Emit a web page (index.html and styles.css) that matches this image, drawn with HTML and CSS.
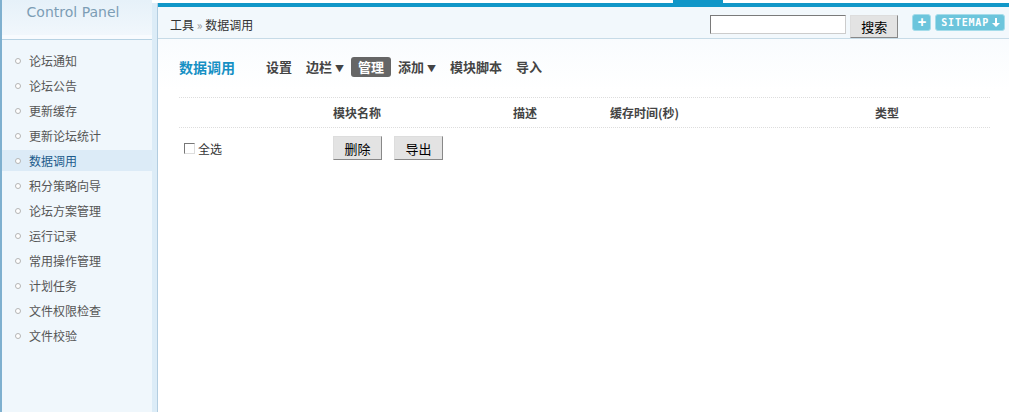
FILE: index.html
```html
<!DOCTYPE html>
<html lang="zh-CN">
<head>
    <meta charset="UTF-8">
    <title>Control Panel - 数据调用</title>
    <link rel="stylesheet" href="styles.css">
</head>
<body>
    <div class="frame">
        <div class="side">
            <div class="side-head">Control Panel</div>
            <ul class="menu">
                <li>论坛通知</li>
                <li>论坛公告</li>
                <li>更新缓存</li>
                <li>更新论坛统计</li>
                <li class="on">数据调用</li>
                <li>积分策略向导</li>
                <li>论坛方案管理</li>
                <li>运行记录</li>
                <li>常用操作管理</li>
                <li>计划任务</li>
                <li>文件权限检查</li>
                <li>文件校验</li>
            </ul>
        </div>
        <div class="strip"></div>
        <div class="main">
            <div class="tabs"><span class="tab"></span></div>
            <div class="topbar">
                <div class="crumb">工具 <span class="sep">&raquo;</span> 数据调用</div>
                <form class="search">
                    <input type="text">
                    <button type="button">搜索</button>
                </form>
                <div class="tools">
                    <span class="pill plus">+</span>
                    <span class="pill">SITEMAP <svg width="8" height="9" viewBox="0 0 8 9"><path d="M3 0h2v5h3L4 9 0 5h3z" fill="#fff"/></svg></span>
                </div>
            </div>
            <div class="content">
                <div class="subnav">
                    <h3>数据调用</h3>
                    <a>设置</a>
                    <a>边栏 <i>&#9660;</i></a>
                    <a class="cur">管理</a>
                    <a>添加 <i>&#9660;</i></a>
                    <a>模块脚本</a>
                    <a>导入</a>
                </div>
                <div class="grid head">
                    <span></span>
                    <span>模块名称</span>
                    <span>描述</span>
                    <span>缓存时间(秒)</span>
                    <span>类型</span>
                </div>
                <div class="grid row">
                    <label class="chk"><span class="box"></span>全选</label>
                    <div class="btns">
                        <button type="button">删除</button>
                        <button type="button">导出</button>
                    </div>
                </div>
            </div>
        </div>
    </div>
</body>
</html>
```

FILE: styles.css
```css
body { margin: 0; font-family: "Noto Sans CJK SC", "DejaVu Sans", sans-serif; font-size: 12px; color: #333; background: #fff; }
.frame { display: flex; width: 1009px; height: 412px; overflow: hidden; }

.side { width: 150px; border-left: 2px solid #7fb0cf; background: #f0f7fc; }
.side-head { height: 35px; border-bottom: 4px solid #f8fbfe; box-shadow: 0 1px 0 #b7d2e3; background: linear-gradient(#e6f1f9, #f1f7fc); color: #7c9db5; font-family: "DejaVu Sans", sans-serif; font-size: 14px; text-align: center; line-height: 24px; padding-right: 8px; margin-bottom: 11px; }
.menu { list-style: none; margin: 0; padding: 0; }
.menu li { height: 21px; line-height: 21px; margin-bottom: 4px; padding-left: 27px; color: #555; position: relative; }
.menu li::before { content: ""; position: absolute; left: 13px; top: 8px; width: 4px; height: 4px; border: 1px solid #b5b5b5; border-radius: 50%; background: #fff; }
.menu li.on { background: #dcebf7; color: #1d5b8c; }

.strip { width: 5px; background: #dcecf7; border-right: 1px solid #b3cde0; margin-top: 3px; }

.main { flex: 1; background: linear-gradient(#f4f9fd 0, #fff 90px); }
.tabs { height: 3px; background: #fff; }
.tab { display: block; width: 50px; height: 3px; margin-left: 515px; background: #1197c8; }
.topbar { display: flex; align-items: center; height: 28px; padding: 3px 4px 0 12px; border-top: 4px solid #1197c8; border-bottom: 1px solid #c7dbe7; background: #f2f8fc; }
.crumb { flex: 1; color: #333; }
.crumb .sep { color: #999; }
.search { display: flex; align-items: flex-start; gap: 4px; height: 23px; margin-top: 5px; }
.search input { width: 132px; height: 15px; padding: 1px; border: 1px solid #7a7a7a; border-right-color: #ccc; border-bottom-color: #ccc; }
.search button { width: 48px; height: 23px; padding: 0; border: 1px solid #888; border-top-color: #ddd; border-left-color: #ddd; background: #e3e3e3; font: 13px "Noto Sans CJK SC", sans-serif; color: #000; }
.tools { display: flex; gap: 4px; margin-left: 14px; margin-right: 0; margin-top: -4px; }
.pill { display: flex; align-items: center; gap: 3px; height: 15px; padding: 0 4px 0 5px; border: 1px solid #a5dcea; border-radius: 3px; background: #6cc5dc; color: #fff; font: bold 10px "DejaVu Sans Mono", monospace; letter-spacing: 0.8px; }
.pill.plus { font-size: 14px; width: 8px; justify-content: center; }

.content { padding: 12px 19px 0 21px; }
.subnav { display: flex; align-items: center; height: 32px; }
.subnav h3 { margin: 0 24px 0 0; font-size: 14px; color: #1690c4; }
.subnav a { padding: 0 7px; height: 20px; line-height: 20px; font-size: 13px; font-weight: bold; color: #444; border-radius: 3px; }
.subnav a i { font-style: normal; font-size: 9px; }
.subnav a.cur { background: #666; color: #fff; }

.grid { display: grid; grid-template-columns: 154px 180px 97px 265px 1fr; align-items: center; }
.head { margin-top: 14px; height: 29px; border-top: 1px dotted #ddd; border-bottom: 1px dotted #ddd; font-weight: bold; color: #444; }
.row { height: 40px; }
.chk { display: flex; align-items: center; gap: 3px; padding-left: 5px; color: #333; }
.chk .box { width: 9px; height: 9px; border: 1px solid #777; border-right-color: #ddd; border-bottom-color: #ddd; background: #fff; }
.btns { grid-column: 2 / 4; display: flex; gap: 12px; }
.btns button { width: 49px; height: 24px; padding: 0; border: 1px solid #888; border-top-color: #ddd; border-left-color: #ddd; background: #e3e3e3; font: 13px "Noto Sans CJK SC", sans-serif; color: #000; }
```
